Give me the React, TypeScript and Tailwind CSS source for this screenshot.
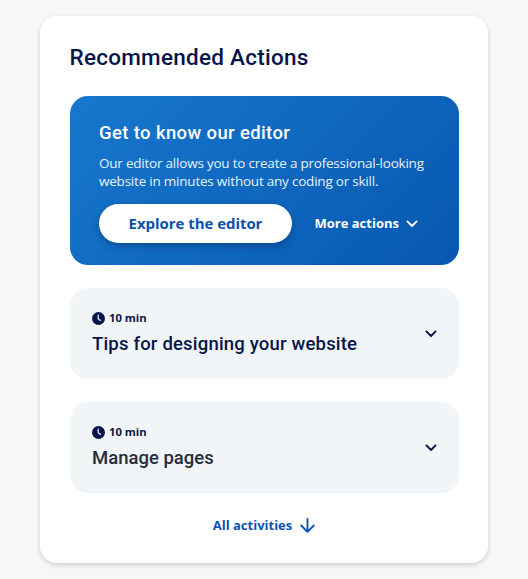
import { ReactNode } from "react";

const activities = [
  { title: "Tips for designing your website", duration: "10 min", color: "text-[#06154a]", tracking: "tracking-[0.19px]" },
  { title: "Manage pages", duration: "10 min", color: "text-[#262c3a]", tracking: "tracking-[0px]" },
];

function Chevron({ className }: { className?: string }) {
  return (
    <svg viewBox="0 0 12 8" fill="none" stroke="currentColor" strokeWidth="1.9" strokeLinecap="round" strokeLinejoin="round" className={className}>
      <path d="M1.4 1.4 6 6l4.6-4.6" />
    </svg>
  );
}

function Clock() {
  return (
    <svg viewBox="0 0 13 13" className="h-[13px] w-[13px] flex-none">
      <circle cx="6.5" cy="6.5" r="6.5" fill="#06154a" />
      <path d="M6.2 3.2v3.5l2.3 1.7" fill="none" stroke="#f1f5f9" strokeWidth="1.2" strokeLinecap="round" strokeLinejoin="round" />
    </svg>
  );
}

function Heading({ className, children }: { className: string; children: ReactNode }) {
  return <div className={`whitespace-nowrap font-['Roboto',sans-serif] font-medium ${className}`}>{children}</div>;
}

export default function App() {
  return (
    <div className="flex h-[579px] w-[528px] bg-[#f7f7f7] pl-10 pt-4 font-['Open_Sans',sans-serif]">
      <div className="h-[547px] w-[448px] rounded-[17px] bg-white px-[29.5px] pt-[26px] shadow-[0_2px_5px_rgba(0,0,0,0.17)]">
        <Heading className="text-[22.5px] leading-[30px] tracking-[0.25px] text-[#06154a]">Recommended Actions</Heading>

        <section className="mt-[23.5px] h-[169.5px] rounded-[18px] bg-linear-[135deg] from-[#1778cd] to-[#0757b0] px-[29.5px] pt-[24px] text-white">
          <Heading className="text-[18.5px] leading-[26px] tracking-[0.37px]">Get to know our editor</Heading>
          <p className="mt-[8px] whitespace-nowrap text-[13.5px] leading-[18px] tracking-[-0.22px] text-[#e6f1fb]">
            Our editor allows you to create a professional-looking
            <br />
            website in minutes without any coding or skill.
          </p>
          <div className="mt-[14.5px] flex items-center">
            <button className="h-[39px] w-[193px] whitespace-nowrap rounded-full bg-white text-[15px] font-bold tracking-[-0.05px] text-[#0a50ad] shadow-[0_3px_7px_rgba(0,30,90,0.4)]">
              Explore the editor
            </button>
            <button className="ml-[22.5px] flex items-center whitespace-nowrap text-[13px] font-bold">
              More actions
              <Chevron className="ml-[7px] h-2 w-3" />
            </button>
          </div>
        </section>

        {activities.map((activity) => (
          <section key={activity.title} className="mt-[23px] flex h-[91px] items-center justify-between rounded-[18px] bg-[#f1f5f8] pl-[22.5px] pr-[22px]">
            <div>
              <div className="flex items-center gap-1 text-[11.25px] font-bold leading-4 text-[#06154a]">
                <Clock />
                {activity.duration}
              </div>
              <Heading className={`mt-[5px] text-[18.5px] leading-[26px] ${activity.color} ${activity.tracking}`}>{activity.title}</Heading>
            </div>
            <Chevron className="h-2 w-3 text-[#06154a]" />
          </section>
        ))}

        <button className="mx-auto mt-[23px] flex items-center whitespace-nowrap text-[13px] font-bold leading-[18px] text-[#0a55b4]">
          All activities
          <svg viewBox="0 0 15 15" fill="none" stroke="currentColor" strokeWidth="1.9" strokeLinecap="round" strokeLinejoin="round" className="ml-[8px] h-[15px] w-[15px]">
            <path d="M7.5 1v12.8M1.2 7.5l6.3 6.3 6.3-6.3" />
          </svg>
        </button>
      </div>
    </div>
  );
}
